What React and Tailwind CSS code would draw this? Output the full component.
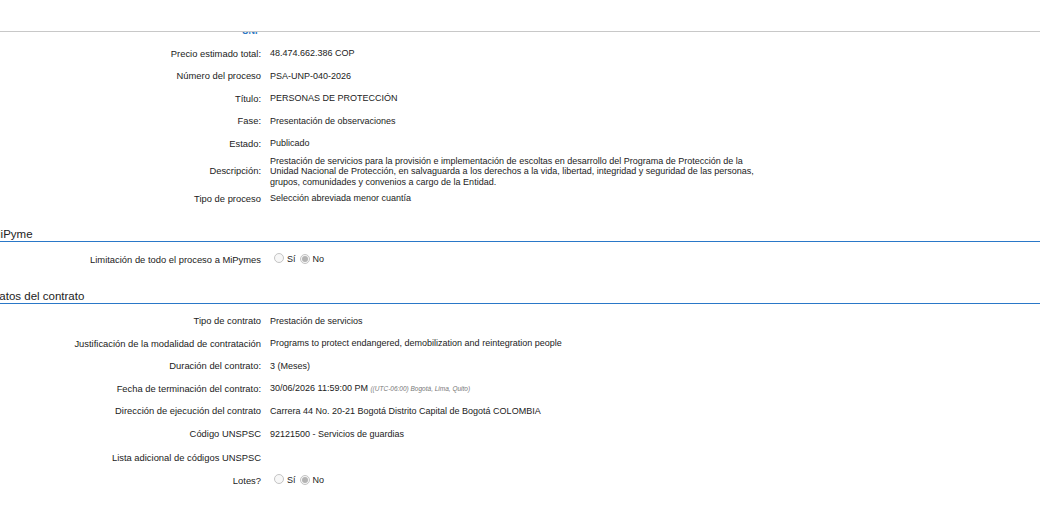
import React from "react";

const generalRows = [
  { label: "Precio estimado total:", value: "48.474.662.386 COP" },
  { label: "Número del proceso", value: "PSA-UNP-040-2026" },
  { label: "Título:", value: "PERSONAS DE PROTECCIÓN" },
  { label: "Fase:", value: "Presentación de observaciones" },
  { label: "Estado:", value: "Publicado" },
  {
    label: "Descripción:",
    value:
      "Prestación de servicios para la provisión e implementación de escoltas en desarrollo del Programa de Protección de la Unidad Nacional de Protección, en salvaguarda a los derechos a la vida, libertad, integridad y seguridad de las personas, grupos, comunidades y convenios a cargo de la Entidad.",
    multi: true,
  },
  { label: "Tipo de proceso", value: "Selección abreviada menor cuantía" },
];

function Radio({ checked }) {
  return (
    <span className="inline-flex items-center justify-center w-[10px] h-[10px] rounded-full border border-[#c4c4c4] bg-[#f7f7f7]">
      {checked && <span className="w-[6px] h-[6px] rounded-full bg-[#b4b4b4]" />}
    </span>
  );
}

function YesNo() {
  return (
    <div className="flex items-center text-[9px] text-[#222]">
      <span className="ml-[4px]">
        <Radio />
      </span>
      <span className="ml-[3px]">Sí</span>
      <span className="ml-[4px]">
        <Radio checked />
      </span>
      <span className="ml-[3px]">No</span>
    </div>
  );
}

function Row({ label, children, multi, tall }) {
  return (
    <div
      className={`grid grid-cols-[261px_1fr] gap-x-[9px] items-center ${
        tall ? "min-h-[24px]" : "min-h-[22.5px]"
      } ${multi ? "py-[0.5px]" : ""}`}
    >
      <div className="text-right text-[9.4px] text-[#222] whitespace-nowrap">{label}</div>
      <div className="text-[9px] text-[#222]">{children}</div>
    </div>
  );
}

function Heading({ children, className = "" }) {
  return (
    <div className={`border-b border-[#2a78c8] text-[11.5px] leading-[14px] text-[#222] ${className}`}>
      <span className="-ml-[9px] inline-block">{children}</span>
    </div>
  );
}

export default function App() {
  return (
    <div
      className="relative w-[1040px] h-[506px] overflow-hidden bg-white"
      style={{ fontFamily: '"Liberation Sans", Arial, sans-serif' }}
    >
      {/* fixed header covering the top */}
      <div className="absolute top-0 left-0 right-0 h-[32px] bg-white border-b border-[#c8c8c8] z-10" />

      <div className="pt-[20px]">
        <div className="grid grid-cols-[261px_1fr] gap-x-[9px] items-center min-h-[22.5px]">
          <div className="text-right text-[9px] font-bold text-[#2f78c4]">UNP</div>
          <div />
        </div>

        {generalRows.map((row) => (
          <Row key={row.label} label={row.label} multi={row.multi}>
            {row.multi ? (
              <p className="w-[490px] leading-[10.5px]">{row.value}</p>
            ) : (
              row.value
            )}
          </Row>
        ))}

        <Heading className="mt-[17px]">MiPyme</Heading>
        <div className="mt-[6.75px]">
          <Row label="Limitación de todo el proceso a MiPymes">
            <YesNo />
          </Row>
        </div>

        <Heading className="mt-[17.25px]">Datos del contrato</Heading>
        <div className="mt-[6.5px]">
          <Row label="Tipo de contrato">Prestación de servicios</Row>
          <Row label="Justificación de la modalidad de contratación">
            Programs to protect endangered, demobilization and reintegration people
          </Row>
          <Row label="Duración del contrato:">3 (Meses)</Row>
          <Row label="Fecha de terminación del contrato:">
            30/06/2026 11:59:00 PM{" "}
            <span className="italic text-[6.5px] text-[#777]">((UTC-06:00) Bogotá, Lima, Quito)</span>
          </Row>
          <Row label="Dirección de ejecución del contrato">
            Carrera 44 No. 20-21 Bogotá Distrito Capital de Bogotá COLOMBIA
          </Row>
          <Row label="Código UNSPSC" tall>92121500 - Servicios de guardias</Row>
          <Row label="Lista adicional de códigos UNSPSC" />
          <Row label="Lotes?" tall>
            <YesNo />
          </Row>
        </div>
      </div>
    </div>
  );
}
